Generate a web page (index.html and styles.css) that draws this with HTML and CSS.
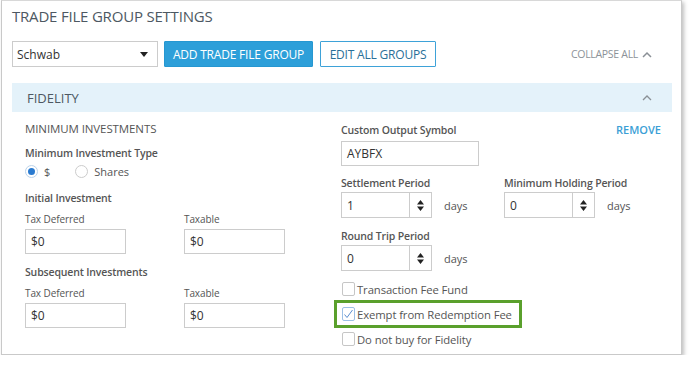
FILE: index.html
```html
<!DOCTYPE html>
<html>
<head>
<meta charset="utf-8">
<link rel="stylesheet" href="styles.css">
</head>
<body>
<div class="panel">
  <h1 class="title">TRADE FILE GROUP SETTINGS</h1>
  <div class="toolbar">
    <div class="select">
      <span>Schwab</span>
      <svg class="sel-arrow" width="8" height="5" viewBox="0 0 8 5"><path d="M0 0H8L4 5Z" fill="#222"/></svg>
    </div>
    <button class="btn btn-primary">ADD TRADE FILE GROUP</button>
    <button class="btn btn-outline">EDIT ALL GROUPS</button>
    <div class="collapse-all">COLLAPSE ALL
      <svg width="10" height="7" viewBox="0 0 10 7"><path d="M1 6L5 2L9 6" fill="none" stroke="#8a9096" stroke-width="1.5"/></svg>
    </div>
  </div>
  <div class="group-head">
    <span>FIDELITY</span>
    <svg width="10" height="7" viewBox="0 0 10 7"><path d="M1 6L5 2L9 6" fill="none" stroke="#8a9096" stroke-width="1.3"/></svg>
  </div>
  <div class="group-body">
    <div class="col-left">
      <div class="section-title">MINIMUM INVESTMENTS</div>
      <div class="label mt-type">Minimum Investment Type</div>
      <div class="radios">
        <label class="radio"><span class="dot on"></span>$</label>
        <label class="radio"><span class="dot"></span>Shares</label>
      </div>
      <div class="label sub">Initial Investment</div>
      <div class="pair">
        <div class="field"><div class="small">Tax Deferred</div><div class="input w100">$0</div></div>
        <div class="field"><div class="small">Taxable</div><div class="input w100">$0</div></div>
      </div>
      <div class="label sub2">Subsequent Investments</div>
      <div class="pair">
        <div class="field"><div class="small">Tax Deferred</div><div class="input w100">$0</div></div>
        <div class="field"><div class="small">Taxable</div><div class="input w100">$0</div></div>
      </div>
    </div>
    <div class="col-right">
      <div class="row-top">
        <div class="label">Custom Output Symbol</div>
        <a class="remove">REMOVE</a>
      </div>
      <div class="input w137">AYBFX</div>
      <div class="spin-row">
        <div class="spin-field first">
          <div class="label">Settlement Period</div>
          <div class="spin-line">
            <div class="spinner"><span class="val">1</span><span class="arrows"><svg width="7" height="11" viewBox="0 0 7 11"><path d="M0 4.5L3.5 0L7 4.5Z M0 6.5L3.5 11L7 6.5Z" fill="#222"/></svg></span></div>
            <span class="days">days</span>
          </div>
        </div>
        <div class="spin-field">
          <div class="label">Minimum Holding Period</div>
          <div class="spin-line">
            <div class="spinner"><span class="val">0</span><span class="arrows"><svg width="7" height="11" viewBox="0 0 7 11"><path d="M0 4.5L3.5 0L7 4.5Z M0 6.5L3.5 11L7 6.5Z" fill="#222"/></svg></span></div>
            <span class="days">days</span>
          </div>
        </div>
      </div>
      <div class="spin-field rt">
        <div class="label">Round Trip Period</div>
        <div class="spin-line">
          <div class="spinner"><span class="val">0</span><span class="arrows"><svg width="7" height="11" viewBox="0 0 7 11"><path d="M0 4.5L3.5 0L7 4.5Z M0 6.5L3.5 11L7 6.5Z" fill="#222"/></svg></span></div>
          <span class="days">days</span>
        </div>
      </div>
      <div class="checks">
        <label class="check"><span class="box"></span>Transaction Fee Fund</label>
        <label class="check highlight"><span class="box on"><svg width="11" height="10" viewBox="0 0 11 10"><path d="M1.5 5.5L4 8.5L9.5 1" fill="none" stroke="#5b8fd0" stroke-width="1"/></svg></span>Exempt from Redemption Fee</label>
        <label class="check"><span class="box"></span>Do not buy for Fidelity</label>
      </div>
    </div>
  </div>
</div>
</body>
</html>
```
FILE: styles.css
```css
* { box-sizing: border-box; }
html, body { margin: 0; padding: 0; background: #fff; }
body { font-family: "Open Sans", "Noto Sans", sans-serif; color: #555; }

.panel {
  margin-left: 1px;
  width: 681px;
  height: 355px;
  border: 1px solid #c9c9c9;
  border-top-color: #d8d8d8;
  box-shadow: 2px 2px 4px rgba(0,0,0,0.25);
  padding: 0 9px 0 10px;
}

.title {
  margin: 0;
  padding-top: 5px;
  height: 40px;
  font-size: 15px;
  font-weight: 400;
  color: #4d5862;
  letter-spacing: -0.2px;
}

.toolbar {
  display: flex;
  align-items: center;
  height: 26px;
}
.select {
  width: 146px;
  height: 26px;
  border: 1px solid #ccc;
  display: flex;
  align-items: center;
  justify-content: space-between;
  padding: 0 9px 0 4px;
  font-size: 12px;
  color: #333;
}
.btn {
  height: 26px;
  font-family: inherit;
  font-size: 12px;
  padding: 0;
  border-radius: 1px;
  letter-spacing: -0.2px;
}
.btn-primary {
  margin-left: 6px;
  width: 149px;
  background: #2d9fd9;
  border: 1px solid #2697d1;
  color: #fff;
}
.btn-outline {
  margin-left: 7px;
  width: 116px;
  background: #fff;
  border: 1px solid #3ea2d8;
  color: #2a6f98;
}
.collapse-all {
  margin-left: auto;
  margin-right: 20px;
  font-size: 10.5px;
  color: #8c9298;
  display: flex;
  align-items: center;
  gap: 4px;
  letter-spacing: -0.3px;
}

.group-head {
  margin-top: 16px;
  height: 29px;
  background: #e4f2fa;
  display: flex;
  align-items: center;
  justify-content: space-between;
  padding: 0 20px 0 15px;
  font-size: 13px;
  color: #4d5862;
}

.group-body {
  display: flex;
  padding-left: 13px;
}
.col-left { width: 316px; }
.col-right { width: 320px; }

.section-title {
  margin-top: 9px;
  font-size: 11.5px;
  color: #555;
  letter-spacing: -0.1px;
}
.label {
  font-size: 10.5px;
  font-weight: 600;
  color: #555;
  letter-spacing: -0.15px;
  white-space: nowrap;
}
.mt-type { margin-top: 10px; }
.radios { display: flex; gap: 25px; height: 22px; align-items: center; font-size: 11px; }
.radio { display: flex; align-items: center; gap: 6px; color: #555; }
.dot {
  width: 13px; height: 13px; border-radius: 50%;
  border: 1px solid #ccc; background: #fff; display: inline-block; position: relative;
}
.dot.on { border-color: #bcd3ea; }
.dot.on::after {
  content: ""; position: absolute; left: 2px; top: 2px; width: 7px; height: 7px;
  border-radius: 50%; background: #2b7bd0;
}
.sub { margin-top: 9px; }
.sub2 { margin-top: 11px; }
.pair { display: flex; gap: 58px; }
.small { font-size: 10px; color: #555; margin-top: 7px; margin-bottom: 3px; letter-spacing: -0.1px; }
.input {
  height: 25px;
  border: 1px solid #ccc;
  font-size: 12px;
  color: #333;
  display: flex; align-items: center;
  padding-left: 5px;
}
.w100 { width: 101px; }
.w137 { width: 138px; margin-top: 4px; }

.row-top { display: flex; justify-content: space-between; align-items: center; margin-top: 10px; }
.remove { font-size: 11px; font-weight: 600; color: #3ba0d6; letter-spacing: 0; }

.spin-row { display: flex; margin-top: 10px; }
.spin-field.first { width: 163px; }
.spin-line { display: flex; align-items: center; gap: 12px; margin-top: 2px; }
.spinner {
  width: 91px; height: 26px; border: 1px solid #ccc; display: flex;
  font-size: 12px; color: #333;
}
.spinner .val { flex: 1; display: flex; align-items: center; padding-left: 5px; border-right: 1px solid #ccc; }
.spinner .arrows { width: 21px; display: flex; align-items: center; justify-content: center; }
.days { font-size: 11px; color: #555; }
.rt { margin-top: 11px; }

.checks { margin-top: 6px; display: flex; flex-direction: column; width: 188px; margin-left: -7px; }
.check {
  display: flex; align-items: center; height: 24px; padding-left: 8px;
  font-size: 11.3px; color: #555; letter-spacing: -0.1px; white-space: nowrap;
}
.check.highlight { border: 3px solid #5aa02c; height: 28px; padding-left: 5px; margin: -1px 0; }
.box {
  width: 13px; height: 14px; border: 1px solid #c6c6c6; border-radius: 2px;
  margin-right: 2px; display: inline-flex; align-items: center; justify-content: center; background: #fff;
}
.box.on { border-color: #9cc0e6; }
```
